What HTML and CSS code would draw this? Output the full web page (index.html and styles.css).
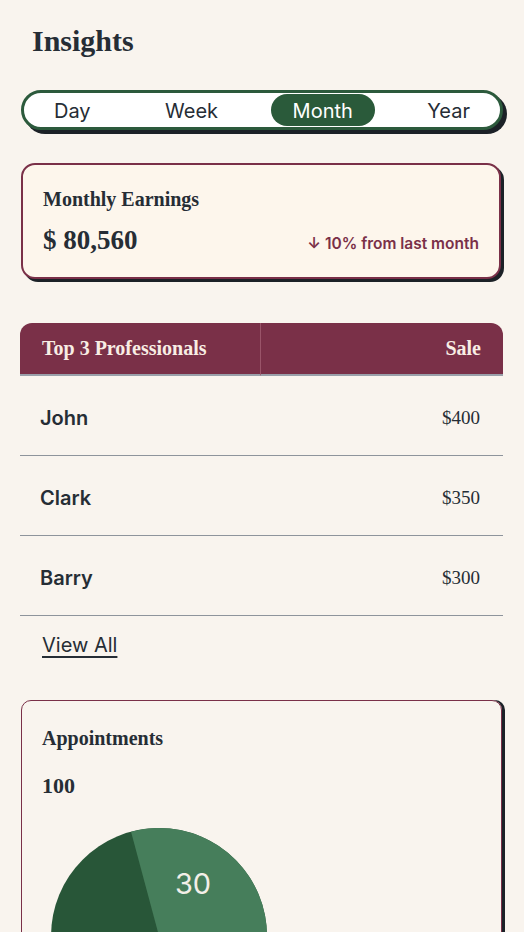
FILE: index.html
```html
<!DOCTYPE html>
<html lang="en">
<head>
<meta charset="utf-8">
<title>Insights</title>
<link rel="stylesheet" href="styles.css">
</head>
<body>
<main class="page">
  <h1 class="title">Insights</h1>

  <nav class="tabs">
    <span class="tab">Day</span>
    <span class="tab">Week</span>
    <span class="tab tab-active">Month</span>
    <span class="tab">Year</span>
  </nav>

  <section class="earnings">
    <h2 class="card-title">Monthly Earnings</h2>
    <div class="earnings-row">
      <span class="amount">$ 80,560</span>
      <span class="delta">↓ 10% from last month</span>
    </div>
  </section>

  <table class="pros">
    <thead>
      <tr>
        <th class="th-name">Top 3 Professionals</th>
        <th class="th-sale">Sale</th>
      </tr>
    </thead>
    <tbody>
      <tr><td class="name">John</td><td class="sale">$400</td></tr>
      <tr><td class="name">Clark</td><td class="sale">$350</td></tr>
      <tr><td class="name">Barry</td><td class="sale">$300</td></tr>
    </tbody>
  </table>

  <a class="view-all" href="#">View All</a>

  <section class="appointments">
    <h2 class="card-title">Appointments</h2>
    <div class="appt-total">100</div>
    <div class="pie-wrap">
      <svg class="pie" width="216" height="216" viewBox="-108 -108 216 216">
        <circle r="108" fill="#285638"/>
        <path d="M0 0 L-27.95 -104.32 A108 108 0 0 1 107.85 5.65 Z" fill="#467e5b"/>
        <text x="34" y="-42" class="pie-label">30</text>
      </svg>
    </div>
  </section>
</main>
</body>
</html>
```

FILE: styles.css
```css
* { box-sizing: border-box; }

html, body {
  margin: 0;
  padding: 0;
  background: #f9f4ee;
}

body {
  font-family: "Inter", "Noto Sans", sans-serif;
  color: #242a31;
}

.page {
  padding: 22px 21px 0 20px;
}

.title {
  margin: 0 0 0 12px;
  font-family: "Liberation Serif", serif;
  font-weight: 700;
  font-size: 30px;
  line-height: 38px;
  color: #262d35;
}

.tabs {
  margin: 30px 0 0 1px;
  height: 40px;
  border: 3px solid #2c5a3c;
  border-radius: 20px;
  background: #ffffff;
  box-shadow: 4px 4px 0 #1c2127;
  display: flex;
  align-items: center;
  justify-content: space-between;
  padding: 0 8px;
}

.tab {
  height: 32px;
  padding: 1px 22px 0;
  border-radius: 16px;
  display: flex;
  align-items: center;
  font-size: 20px;
  color: #262d35;
}

.tab-active {
  background: #2a5a3a;
  color: #ffffff;
}

.earnings {
  margin: 33px 2px 0 1px;
  border: 2px solid #7a3048;
  border-radius: 14px;
  background: #fdf6ec;
  box-shadow: 3px 3px 0 #1c2127;
  padding: 22px 20px 21px 20px;
}

.card-title {
  margin: 0;
  font-family: "Liberation Serif", serif;
  font-weight: 700;
  font-size: 20px;
  line-height: 24px;
  color: #262d35;
}

.earnings-row {
  margin-top: 13px;
  display: flex;
  justify-content: space-between;
  align-items: baseline;
}

.amount {
  font-family: "Liberation Serif", serif;
  font-weight: 700;
  font-size: 27px;
  line-height: 32px;
  color: #262d35;
}

.delta {
  font-size: 15.5px;
  font-weight: 600;
  color: #7a3048;
}

.pros {
  margin-top: 44px;
  width: 100%;
  border-collapse: separate;
  border-spacing: 0;
}

.pros th {
  height: 53px;
  background: #7a3048;
  color: #f8ede4;
  font-family: "Liberation Serif", serif;
  font-weight: 700;
  font-size: 20px;
  border-bottom: 2px solid #9aa0aa;
  padding: 0 22px;
}

.th-name {
  text-align: left;
  width: 241px;
  border-top-left-radius: 12px;
  border-right: 1px solid #9a5469;
}

.th-sale {
  text-align: right;
  border-top-right-radius: 12px;
}

.pros td {
  height: 80px;
  border-bottom: 1.5px solid #8e949c;
  padding: 4px 23px 0 20px;
}

.name {
  font-size: 20px;
  font-weight: 600;
  color: #262d35;
}

.sale {
  text-align: right;
  font-family: "Liberation Serif", serif;
  font-size: 19px;
  color: #262d35;
}

.view-all {
  display: inline-block;
  margin: 17px 0 0 22px;
  font-size: 20px;
  color: #262d35;
  text-decoration: underline;
  text-underline-offset: 4px;
  text-decoration-thickness: 1.5px;
}

.appointments {
  margin: 43px 1px 0 1px;
  border: 1.5px solid #7a3048;
  border-radius: 10px;
  box-shadow: 3px 0 0 #1c2127;
  padding: 25px 20px 40px 20px;
  height: 300px;
}

.appt-total {
  margin-top: 23px;
  font-family: "Liberation Serif", serif;
  font-weight: 700;
  font-size: 22px;
  color: #262d35;
}

.pie-wrap {
  margin: 29px 0 0 9px;
}

.pie { display: block; }

.pie-label {
  fill: #f3efe8;
  font-family: "Inter", "Noto Sans", sans-serif;
  font-size: 29px;
  text-anchor: middle;
}
```
